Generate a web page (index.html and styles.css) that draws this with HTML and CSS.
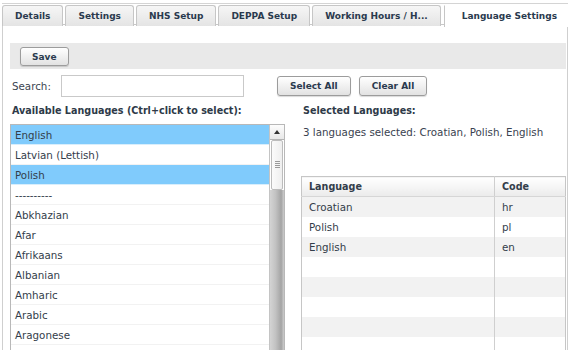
FILE: index.html
```html
<!DOCTYPE html>
<html lang="en">

<head>
    <meta charset="UTF-8">
    <link rel="stylesheet" href="styles.css">
    <title>Language Settings</title>
</head>

<body>
    <div class="page">
        <div class="tabs">
            <div class="tab">Details</div>
            <div class="tab">Settings</div>
            <div class="tab">NHS Setup</div>
            <div class="tab">DEPPA Setup</div>
            <div class="tab">Working Hours / H...</div>
            <div class="tab active">Language Settings</div>
        </div>
        <div class="panel">
            <div class="toolbar">
                <button class="btn">Save</button>
            </div>
            <div class="search-row">
                <label class="search-label">Search:</label>
                <input type="text" class="search-input">
                <div class="search-buttons">
                    <button class="btn">Select All</button>
                    <button class="btn">Clear All</button>
                </div>
            </div>
            <div class="columns">
                <div class="col-left">
                    <h3 class="heading">Available Languages (Ctrl+click to select):</h3>
                    <div class="listbox">
                        <div class="options">
                            <div class="option selected">English</div>
                            <div class="option">Latvian (Lettish)</div>
                            <div class="option selected">Polish</div>
                            <div class="option">----------</div>
                            <div class="option">Abkhazian</div>
                            <div class="option">Afar</div>
                            <div class="option">Afrikaans</div>
                            <div class="option">Albanian</div>
                            <div class="option">Amharic</div>
                            <div class="option">Arabic</div>
                            <div class="option">Aragonese</div>
                        </div>
                        <div class="scrollbar">
                            <div class="scroll-up"></div>
                            <div class="scroll-thumb">
                                <span class="grip"></span>
                            </div>
                            <div class="scroll-track"></div>
                        </div>
                    </div>
                </div>
                <div class="col-right">
                    <h3 class="heading">Selected Languages:</h3>
                    <p class="summary">3 languages selected: Croatian, Polish, English</p>
                    <table class="lang-table">
                        <thead>
                            <tr>
                                <th>Language</th>
                                <th class="code">Code</th>
                            </tr>
                        </thead>
                        <tbody>
                            <tr><td>Croatian</td><td>hr</td></tr>
                            <tr><td>Polish</td><td>pl</td></tr>
                            <tr><td>English</td><td>en</td></tr>
                            <tr><td></td><td></td></tr>
                            <tr><td></td><td></td></tr>
                            <tr><td></td><td></td></tr>
                            <tr><td></td><td></td></tr>
                            <tr><td></td><td></td></tr>
                        </tbody>
                    </table>
                </div>
            </div>
        </div>
    </div>
</body>

</html>
```

FILE: styles.css
```css
* {
    margin: 0;
    padding: 0;
    box-sizing: border-box;
}

html,
body {
    height: 100%;
    overflow: hidden;
}

body {
    background-color: #fff;
    font-family: 'DejaVu Sans', Verdana, sans-serif;
    font-size: 10.3px;
    color: #2e3a48;
}

.page {
    padding: 3px 3px 0 2px;
}

.tabs {
    display: flex;
    gap: 2px;
    border-top: 1px solid #d4d4d4;
    padding-top: 1px;
    border-bottom: 1px solid #c8c8c8;
    height: 22px;
}

.tab {
    height: 21px;
    line-height: 20px;
    padding: 0 12px;
    font-size: 9px;
    font-weight: bold;
    color: #2a3a4e;
    background: linear-gradient(#f6f6f6, #e4e4e4);
    border: 1px solid #c6c6c6;
    border-bottom: none;
    border-radius: 3px 3px 0 0;
    white-space: nowrap;
}

.tab.active {
    height: 22px;
    margin-left: auto;
    padding: 0 11px 0 17px;
    background: #fff;
    border-top-color: #fff;
    border-right: none;
    border-radius: 0;
}

.panel {
    border-left: 1px solid #cfcfcf;
    border-right: 1px solid #cfcfcf;
    padding: 18px 1px 0 7px;
    height: 330px;
}

.toolbar {
    background-color: #e9e9e9;
    height: 26px;
    padding: 4px 10px;
}

.btn {
    font-family: 'DejaVu Sans', Verdana, sans-serif;
    font-size: 9px;
    font-weight: bold;
    color: #2a3a4e;
    height: 19px;
    padding: 0 11px;
    background: linear-gradient(#ffffff, #e2e2e2);
    border: 1px solid #9c9c9c;
    border-radius: 3px;
    box-shadow: 0 1px 1px rgba(0, 0, 0, 0.15);
}

.search-row {
    display: flex;
    align-items: center;
    margin-top: 6px;
    height: 22px;
}

.search-label {
    width: 51px;
    padding-left: 2px;
    color: #3b4450;
}

.search-input {
    width: 183px;
    height: 22px;
    border: 1px solid #c9c9c9;
    background: #fff;
}

.search-buttons {
    display: flex;
    gap: 8px;
    margin-left: 33px;
}

.search-buttons .btn {
    height: 20px;
    padding: 0 12px;
}

.columns {
    display: flex;
    gap: 16px;
    margin-top: 6px;
}

.heading {
    font-size: 9.6px;
    font-weight: bold;
    color: #2e3a48;
    height: 21px;
    line-height: 16px;
    padding-left: 2px;
}

.col-left {
    width: 275px;
}

.listbox {
    display: flex;
    height: 250px;
    border: 1px solid #b8b8b8;
}

.options {
    flex: 1;
}

.option {
    height: 20px;
    line-height: 20px;
    padding-left: 4px;
    border-bottom: 1px solid #f2f2f2;
    color: #333d4a;
}

.option.selected {
    background-color: #80cbfc;
    border-bottom-color: #d8eefc;
}

.scrollbar {
    width: 15px;
    display: flex;
    flex-direction: column;
    border-left: 1px solid #c4c4c4;
}

.scroll-up {
    height: 15px;
    background: linear-gradient(#fdfdfd, #e8e8e8);
    border-bottom: 1px solid #b4b4b4;
    position: relative;
}

.scroll-up::after {
    content: '';
    position: absolute;
    left: 4px;
    top: 5px;
    border-left: 3px solid transparent;
    border-right: 3px solid transparent;
    border-bottom: 4px solid #333;
}

.scroll-thumb {
    height: 50px;
    margin: 0 1px;
    background: linear-gradient(to right, #fbfbfb, #eeeeee);
    border: 1px solid #bcbcbc;
    border-radius: 2px;
    display: flex;
    align-items: center;
    justify-content: center;
}

.grip {
    width: 5px;
    height: 8px;
    background: repeating-linear-gradient(#9a9a9a 0 1px, transparent 1px 2px);
}

.scroll-track {
    flex: 1;
    background: linear-gradient(to right, #d4d4d4, #c2c2c2 40%, #a4a4a4 80%, #cccccc);
}

.col-right {
    flex: 1;
}

.summary {
    line-height: 16px;
    padding-left: 2px;
    color: #3a4250;
}

.lang-table {
    width: 265px;
    margin-top: 36px;
    border-collapse: collapse;
    border: 1px solid #c6c6c6;
}

.lang-table th,
.lang-table td {
    height: 20px;
    padding: 0 7px;
    text-align: left;
    color: #333d4a;
}

.lang-table th {
    font-size: 9.6px;
    font-weight: bold;
    background: linear-gradient(#ffffff, #ebebeb);
    border-bottom: 1px solid #d6d6d6;
}

.lang-table .code,
.lang-table td + td {
    width: 71px;
    border-left: 1px solid #cfcfcf;
}

.lang-table tbody tr:nth-child(odd) {
    background-color: #f2f2f2;
}
```
